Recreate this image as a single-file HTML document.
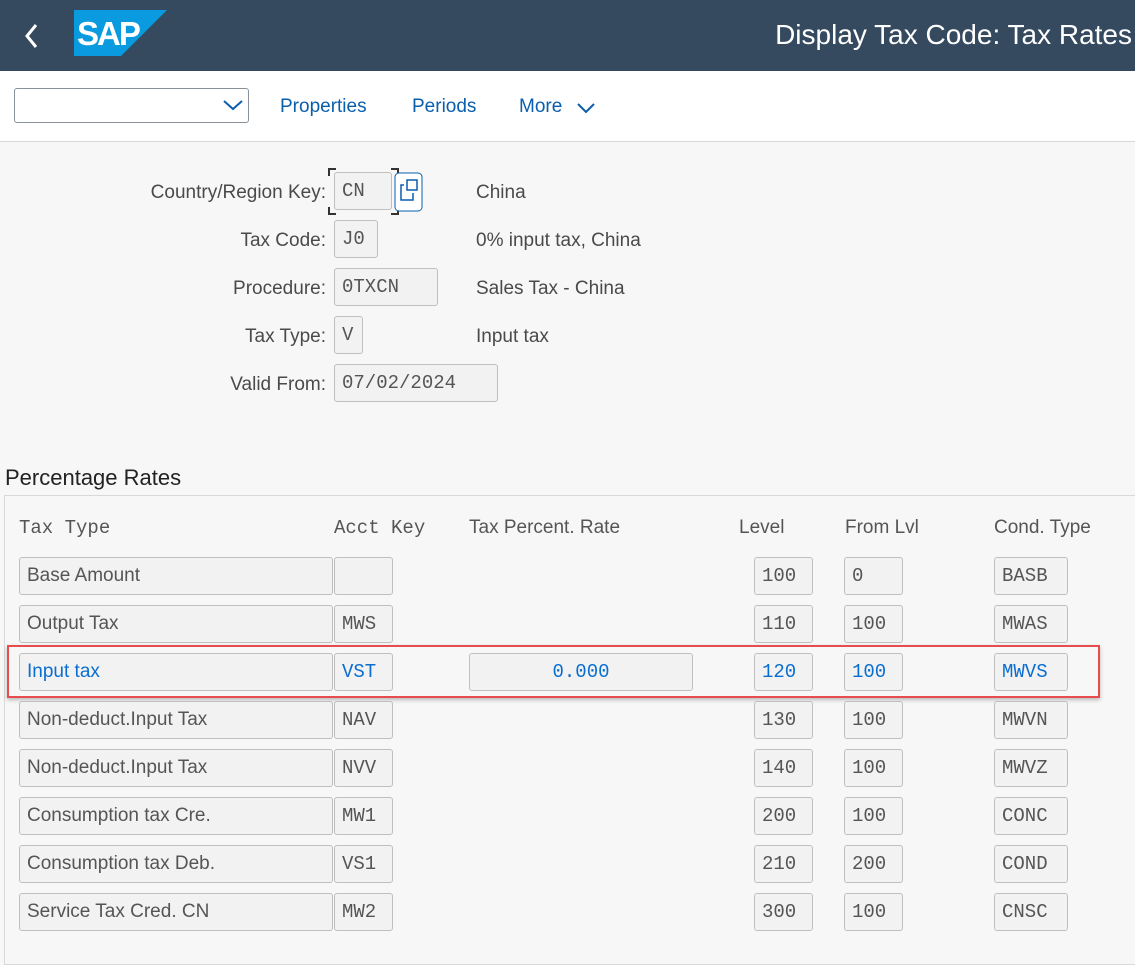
<!DOCTYPE html>
<html><head><meta charset="utf-8"><style>
*{box-sizing:border-box;margin:0;padding:0}
body{width:1135px;height:959px;overflow:hidden;background:#f7f7f7;font-family:"Liberation Sans",sans-serif;color:#32363a;position:relative}
.a{position:absolute}
.hdr{left:0;top:0;width:1135px;height:71px;background:#354a5f}
.tb{left:0;top:71px;width:1135px;height:71px;background:#fff;border-bottom:1px solid #d9d9d9}
.lnk{color:#0a5fad;font-size:19px;top:96px}
.lbl{font-size:19px;color:#4a4a4a;text-align:right;width:320px;left:6px}
.in{background:#f2f2f2;border:1px solid #bfbfbf;border-radius:3px;height:38px;font-size:19px;color:#555;padding-left:7px;line-height:36px;white-space:nowrap;overflow:hidden}
.m{font-family:"Liberation Mono",monospace}
.blue{color:#0a6ed1}
.desc{font-size:19px;color:#4a4a4a;left:476px}
.ch{font-size:19px;color:#555;top:517px}
</style></head><body>
<div class="a hdr"></div>
<svg class="a" style="left:22px;top:22px" width="20" height="28"><path d="M14 3 L5 14 L14 25" stroke="#fff" stroke-width="3" fill="none"/></svg>
<svg class="a" style="left:74px;top:10px" width="93" height="46"><polygon points="0,0 93,0 47,46 0,46" fill="#0a9ae0"/><text x="3" y="35" font-family="Liberation Sans" font-weight="bold" font-size="33" fill="#fff" letter-spacing="-2">SAP</text></svg>
<div class="a" style="right:3px;top:19px;color:#fff;font-size:28px">Display Tax Code: Tax Rates</div>
<div class="a tb"></div>
<div class="a" style="left:14px;top:88px;width:235px;height:35px;border:1px solid #89919a;border-radius:3px;background:#fff"></div>
<svg class="a" style="left:222px;top:98px" width="22" height="14"><path d="M2 3 L11 11 L20 3" stroke="#0a5fad" stroke-width="2" fill="none"/></svg>
<div class="a lnk" style="left:280px">Properties</div>
<div class="a lnk" style="left:412px">Periods</div>
<div class="a lnk" style="left:519px">More</div>
<svg class="a" style="left:576px;top:101px" width="22" height="14"><path d="M2 3 L10 11 L18 3" stroke="#0a5fad" stroke-width="2" fill="none"/></svg>

<div class="a lbl" style="top:182px">Country/Region Key:</div>
<div class="a in m" style="left:334px;top:172px;width:58px">CN</div>
<svg class="a" style="left:328px;top:168px" width="100" height="48"><path d="M1 8V1H8M63 1H70V8M1 39V46H8M63 46H70V39" stroke="#333" stroke-width="2" fill="none"/><rect x="67" y="5" width="27" height="38" rx="4" fill="#fff" stroke="#0a5fad"/><rect x="79" y="12" width="10" height="10" fill="none" stroke="#0a5fad" stroke-width="1.5"/><path d="M76 17H73V32H85V25" stroke="#0a5fad" stroke-width="1.5" fill="none"/></svg>
<div class="a desc" style="top:182px">China</div>
<div class="a lbl" style="top:230px">Tax Code:</div>
<div class="a in m" style="left:334px;top:220px;width:44px">J0</div>
<div class="a desc" style="top:230px">0% input tax, China</div>
<div class="a lbl" style="top:278px">Procedure:</div>
<div class="a in m" style="left:334px;top:268px;width:104px">0TXCN</div>
<div class="a desc" style="top:278px">Sales Tax - China</div>
<div class="a lbl" style="top:326px">Tax Type:</div>
<div class="a in m" style="left:334px;top:316px;width:29px">V</div>
<div class="a desc" style="top:326px">Input tax</div>
<div class="a lbl" style="top:374px">Valid From:</div>
<div class="a in m" style="left:334px;top:364px;width:164px">07/02/2024</div>

<div class="a" style="left:5px;top:465px;font-size:22px;color:#222">Percentage Rates</div>
<div class="a" style="left:4px;top:495px;width:1135px;height:470px;border:1px solid #d9d9d9;background:#f7f7f7"></div>
<div class="a ch m" style="left:19px">Tax Type</div>
<div class="a ch m" style="left:334px">Acct Key</div>
<div class="a ch" style="left:469px">Tax Percent. Rate</div>
<div class="a ch" style="left:739px">Level</div>
<div class="a ch" style="left:845px">From Lvl</div>
<div class="a ch" style="left:994px">Cond. Type</div>

<div class="a" style="left:7px;top:645px;width:1093px;height:53px;border:2px solid #e84c4c;box-shadow:0 2px 4px rgba(0,0,0,.25)"></div>

<div id="rows"></div>
<script>
var r=[["Base Amount","","100","0","BASB"],["Output Tax","MWS","110","100","MWAS"],["Input tax","VST","120","100","MWVS"],["Non-deduct.Input Tax","NAV","130","100","MWVN"],["Non-deduct.Input Tax","NVV","140","100","MWVZ"],["Consumption tax Cre.","MW1","200","100","CONC"],["Consumption tax Deb.","VS1","210","200","COND"],["Service Tax Cred. CN","MW2","300","100","CNSC"]];
var h="";r.forEach(function(x,i){var y=557+i*48,b=i==2?" blue":"";
h+='<div class="a in'+b+'" style="left:19px;top:'+y+'px;width:314px">'+x[0]+'</div>';
h+='<div class="a in m'+b+'" style="left:334px;top:'+y+'px;width:59px">'+x[1]+'</div>';
if(i==2)h+='<div class="a in m blue" style="left:469px;top:'+y+'px;width:224px;text-align:center;padding:0">0.000</div>';
h+='<div class="a in m'+b+'" style="left:754px;top:'+y+'px;width:59px">'+x[2]+'</div>';
h+='<div class="a in m'+b+'" style="left:844px;top:'+y+'px;width:59px">'+x[3]+'</div>';
h+='<div class="a in m'+b+'" style="left:994px;top:'+y+'px;width:74px">'+x[4]+'</div>';});
document.getElementById("rows").innerHTML=h;
</script>
</body></html>
